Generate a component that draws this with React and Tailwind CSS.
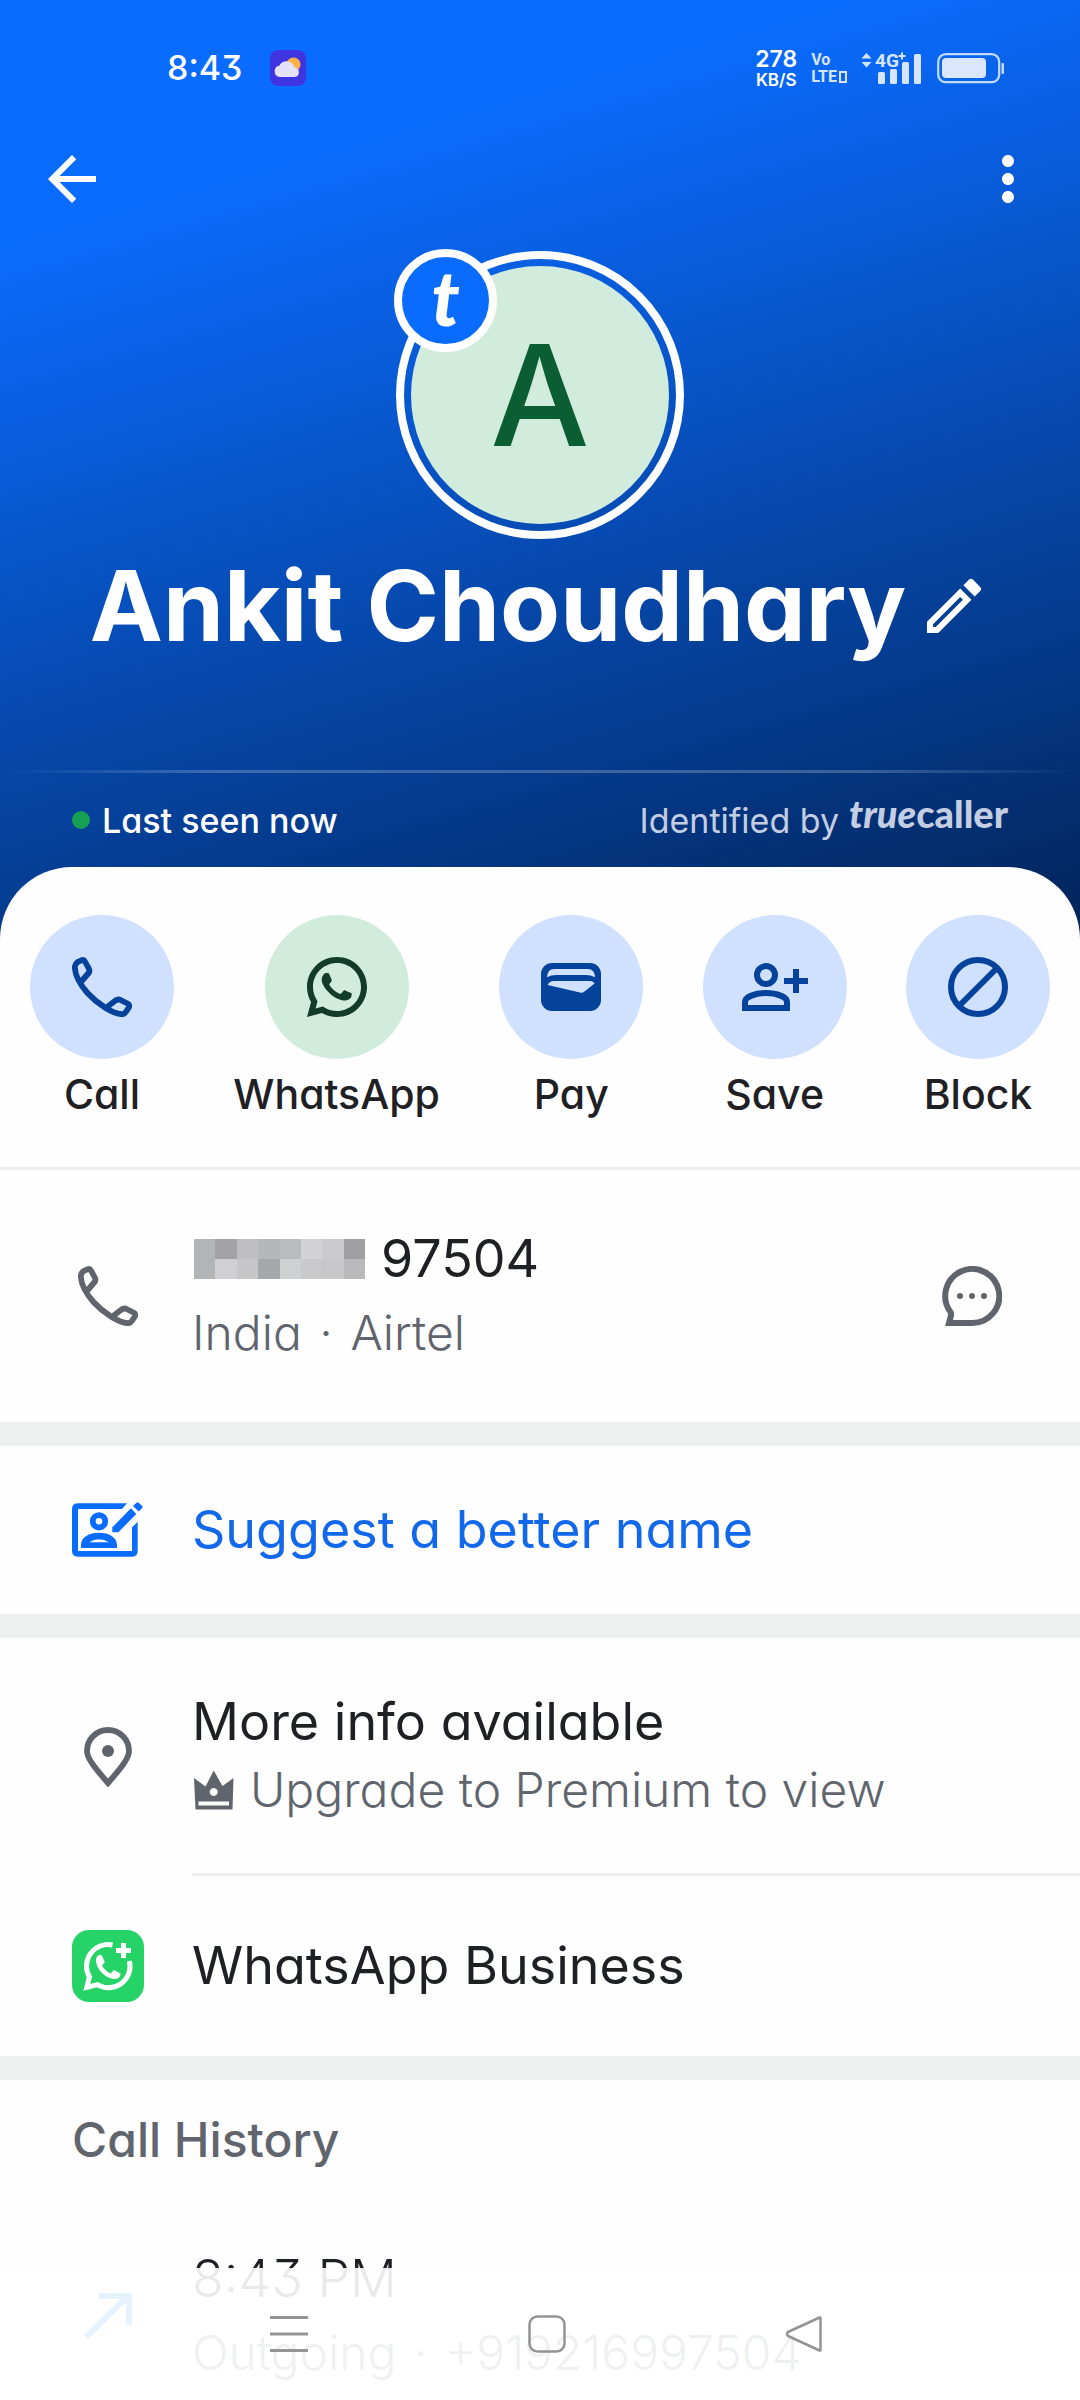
import { MdArrowBack, MdMoreVert, MdOutlineModeEdit } from 'react-icons/md';
import { RiWhatsappLine } from 'react-icons/ri';

const PhoneIcon = () => (
    <svg viewBox="0 0 60 60" className="h-[60px] w-[60px]" fill="none" stroke="currentColor" strokeWidth="5.8" strokeLinejoin="round">
        <path d="M8.5 25.5 L17 15.5 Q18 13.5 16.5 11 L13 4.5 Q11.8 2.3 9 3.5 L5.5 5.2 Q3 6.8 2.8 10 C3 18 8.5 28 15.5 36 C25 46.5 41 57 50 57.2 Q52.5 57.2 54 54.8 L56.8 50.5 Q58 48 55.5 46.5 L48.5 43 Q46 41.8 43.5 43.5 L34.5 50.5" />
    </svg>
);

const PayIcon = () => (
    <svg viewBox="0 0 60 48" className="h-[48px] w-[60px]">
        <rect width="60" height="48" rx="11" fill="currentColor" />
        <path d="M6 14.3 Q6.5 6 13 6 H47 Q53.5 6 54 14.3 Q50 12 45 12 H15 Q10 12 6 14.3Z" fill="#cfe1ff" />
        <path d="M6.6 22 Q8.5 18 13 18 H49.5 Q52.5 18 53.6 20.5 L43.5 28.6 Q41.5 30.3 39 29.6Z" fill="#cfe1ff" />
    </svg>
);

const SaveIcon = () => (
    <svg viewBox="0 0 72 72" className="h-[72px] w-[72px]" fill="none" stroke="currentColor" strokeWidth="6">
        <circle cx="27" cy="24" r="9" />
        <path d="M6 57 V51 C6 46 16 42 27 42 S48 46 48 51 V57Z" />
        <path d="M57 18 V42 M45 30 H69" />
    </svg>
);

const BlockIcon = () => (
    <svg viewBox="0 0 60 60" className="h-[60px] w-[60px]" fill="none" stroke="currentColor" strokeWidth="6">
        <circle cx="30" cy="30" r="27" />
        <path d="M11 49 L49 11" />
    </svg>
);

const ChatIcon = () => (
    <svg viewBox="0 0 60 60" className="h-[60px] w-[60px]">
        <path d="M7 57 H30 A27 27 0 1 0 8.5 46 Q9.3 47.5 9 49.5Z" fill="none" stroke="currentColor" strokeWidth="6" />
        <g fill="currentColor">
            <circle cx="18" cy="30" r="3" />
            <circle cx="30" cy="30" r="3" />
            <circle cx="42" cy="30" r="3" />
        </g>
    </svg>
);

const SuggestIcon = () => (
    <svg viewBox="0 0 72 56" className="h-[56px] w-[72px]">
        <path d="M55 1.3 L50 7 H6 V49 H60 V25.3 L65.7 19.7 V49 Q65.7 54.7 60 54.7 H6 Q0 54.7 0 49 V7 Q0 1.3 6 1.3Z" fill="currentColor" />
        <circle cx="27" cy="19.3" r="6.2" fill="none" stroke="currentColor" strokeWidth="5.8" />
        <path
            fillRule="evenodd"
            d="M9 46 V43 C9 35 17 30.7 27 30.7 S45 35 45 43 V46Z M17.3 40.3 H37 Q32 37.3 27 37.3 T17.3 40.3Z"
            fill="currentColor"
        />
        <path d="M40.3 30.3 V25.3 L59 6.3 L64.3 12 L46.3 30.3Z" fill="currentColor" />
        <path d="M61 4 L64.8 0.6 Q65.8 0 66.7 0.8 L70.3 4.2 Q71 5.2 70.2 6 L66.7 9.4Z" fill="currentColor" />
    </svg>
);

const PinIcon = () => (
    <svg viewBox="0 0 48 60" className="h-[60px] w-[48px]">
        <path d="M24 56 C10 40 3 31 3 24 A21 21 0 0 1 45 24 C45 31 38 40 24 56Z" fill="none" stroke="currentColor" strokeWidth="5.8" />
        <circle cx="24" cy="24" r="6" fill="currentColor" />
    </svg>
);

const CrownIcon = () => (
    <svg viewBox="0 0 40 40" className="h-[40px] w-[40px]">
        <path
            fillRule="evenodd"
            d="M0 8 L11.5 16.5 L19.7 0.5 L28.5 16 L39.5 8 L38.5 39.5 H1.5Z M19.7 18 A4 4 0 1 0 19.8 18Z M4.5 31.5 V35.5 H35 V31.5Z"
            fill="currentColor"
        />
    </svg>
);

const WhatsAppBusinessIcon = () => (
    <svg viewBox="0 0 72 72" className="h-[72px] w-[72px]">
        <rect width="72" height="72" rx="17" fill="#25d366" />
        <path
            d="M40.5 15 A21.5 21.5 0 0 0 17.5 47 L14.8 57.3 L25.4 54.6 A21.5 21.5 0 0 0 57.4 31"
            fill="none"
            stroke="#fff"
            strokeWidth="5"
        />
        <path d="M51.5 13 V28 M44 20.5 H59" stroke="#fff" strokeWidth="5" />
        <path
            d="M24 30 Q24 25.5 28 25 H29.5 L32.8 32 L30 35.5 Q33 41 38.5 43.5 L42 40 L48.5 43.5 Q48.5 48.5 43 49 C34 49 24 39.5 24 30Z"
            fill="#fff"
        />
    </svg>
);

const OutgoingIcon = () => (
    <svg viewBox="0 0 48 48" className="h-[48px] w-[48px]" fill="none" stroke="#0a7cff" strokeWidth="6">
        <path d="M2 45 L44 4 M15 4 H45 V33" />
    </svg>
);

const WeatherIcon = () => (
    <svg viewBox="0 0 36 36" className="h-[36px] w-[36px]">
        <rect width="36" height="36" rx="8" fill="#3f35e0" />
        <circle cx="23.5" cy="14.5" r="7" fill="#fdb045" />
        <path d="M10 27 A5.8 5.8 0 0 1 9.5 15.5 A8 8 0 0 1 23.5 15.5 Q25 18 28.5 20 Q30 26.5 24.5 27Z" fill="#e4e2fb" />
    </svg>
);

const SignalIcon = () => (
    <svg viewBox="0 0 62 36" className="h-[36px] w-[62px] text-[#d6e5fc]" fill="currentColor">
        <path d="M0.5 8.5 L5.5 3 L10.5 8.5Z M0.5 12 H10.5 L5.5 17.5Z" />
        <text x="14" y="17" fontSize="19" fontWeight="700" className="font-[Roboto,sans-serif]">4G</text>
        <path d="M41 2.5 V9.5 M37.5 6 H44.5" stroke="currentColor" strokeWidth="2" />
        <rect x="17" y="22" width="7" height="12" rx="1.5" />
        <rect x="29" y="19" width="7" height="15" rx="1.5" />
        <rect x="41" y="12" width="7" height="22" rx="1.5" />
        <rect x="53" y="4" width="7" height="30" rx="1.5" />
    </svg>
);

const BatteryIcon = () => (
    <svg viewBox="0 0 68 32" className="h-[32px] w-[68px]">
        <rect x="1.2" y="2.2" width="61" height="28" rx="7.5" fill="none" stroke="#c3dafb" strokeWidth="2.2" />
        <rect x="5" y="6" width="44" height="20" rx="4" fill="#d9e6fc" />
        <rect x="64.5" y="11" width="2.5" height="11" rx="1" fill="#c3dafb" />
    </svg>
);

const actions = [
    { label: 'Call', icon: <PhoneIcon /> },
    { label: 'WhatsApp', icon: <RiWhatsappLine size={72} />, green: true },
    { label: 'Pay', icon: <PayIcon /> },
    { label: 'Save', icon: <SaveIcon /> },
    { label: 'Block', icon: <BlockIcon /> },
];

// Hidden digits of the number, two rows of eight blocks
const mosaic = [
    '#b3b4b6', '#a3a3a6', '#bfbfc2', '#b5b7b9', '#b9bbbd', '#d3d3d5', '#cbcbcd', '#a0a0a2',
    '#b3b4b6', '#d0d0d2', '#c6c6c8', '#a6a7aa', '#cfd0d2', '#c9c9cb', '#c7c7ca', '#bababc',
];

const StatusBar = () => (
    <div className="flex h-[136px] items-center justify-between pl-[167px] pr-[75px]">
        <div className="flex items-center gap-7">
            <span className="text-[34px] font-medium leading-none">8:43</span>
            <WeatherIcon />
        </div>
        <div className="flex items-center gap-[14px]">
            <div className="flex flex-col items-center font-semibold">
                <span className="text-[23px] leading-[24px]">278</span>
                <span className="text-[17px] leading-[18px]">KB/S</span>
            </div>
            <div className="flex flex-col font-[Roboto,sans-serif] text-[16px] font-bold leading-[17px] text-[#d6e5fc]">
                <span>Vo</span>
                <span className="flex items-center gap-[2px]">
                    LTE
                    <span className="h-3 w-2 border-2 border-[#d6e5fc]" />
                </span>
            </div>
            <SignalIcon />
            <BatteryIcon />
        </div>
    </div>
);

const Header = () => (
    <header className="bg-[linear-gradient(164deg,#0a6cff_19%,#022458_100%)] pb-[72px] text-white">
        <StatusBar />
        <div className="flex h-[86px] items-center justify-between px-9">
            <button type="button" aria-label="Back">
                <MdArrowBack size={72} />
            </button>
            <button type="button" aria-label="More options">
                <MdMoreVert size={72} />
            </button>
        </div>

        <div className="relative mx-auto mt-[29px] flex h-[288px] w-[288px] items-center justify-center rounded-full border-8 border-white">
            <div className="flex h-[258px] w-[258px] items-center justify-center rounded-full bg-[#d1ebdd] text-[140px] font-medium leading-none text-[#0b5e31]">
                A
            </div>
            <div className="absolute -left-[10px] -top-[10px] flex h-[103px] w-[103px] items-center justify-center rounded-full border-8 border-white bg-[#0a6cff] pb-2 font-[Lato,sans-serif] text-[76px] font-black italic leading-none">
                t
            </div>
        </div>

        <div className="mt-3 flex items-center justify-center gap-3">
            <h1 className="text-[98px] font-bold leading-[110px]">Ankit Choudhary</h1>
            <button type="button" aria-label="Edit name">
                <MdOutlineModeEdit size={72} />
            </button>
        </div>

        <div className="mt-[109px] h-[3px] bg-[linear-gradient(90deg,transparent,#ffffff38_20%,#ffffff38_80%,transparent)]" />
        <div className="flex h-[94px] items-center justify-between px-[72px] text-[34px]">
            <div className="flex items-center gap-3">
                <span className="h-[18px] w-[18px] rounded-full bg-[#16a054]" />
                <span className="font-medium">Last seen now</span>
            </div>
            <div className="flex items-center gap-[10px] text-[#c3cee2]">
                <span>Identified by</span>
                <span className="pb-[14px] font-[Lato,sans-serif] text-[38px] font-black leading-none">
                    <span className="italic">true</span>caller
                </span>
            </div>
        </div>
    </header>
);

const Row = ({ icon, children, className = '' }) => (
    <div className={`flex items-center gap-12 pl-[72px] ${className}`}>
        <div className="flex w-[72px] shrink-0 justify-center text-[#60656d]">{icon}</div>
        {children}
    </div>
);

const Band = () => <div className="h-6 bg-[#eef0ef]" />;

const NavBar = () => (
    <nav className="fixed inset-x-0 bottom-0 flex h-[132px] items-center justify-between bg-white/90 pl-[253px] pr-[240px] text-[#949494]">
        <button type="button" aria-label="Recent apps" className="flex w-[72px] justify-center">
            <svg viewBox="0 0 38 38" className="h-[38px] w-[38px]" stroke="currentColor" strokeWidth="3">
                <path d="M0 2.5 H38 M0 19 H38 M0 35.5 H38" />
            </svg>
        </button>
        <button type="button" aria-label="Home" className="flex w-[72px] justify-center">
            <svg viewBox="0 0 38 38" className="h-[38px] w-[38px]" fill="none" stroke="currentColor" strokeWidth="2.5">
                <rect x="1.5" y="1.5" width="35" height="35" rx="8" />
            </svg>
        </button>
        <button type="button" aria-label="Back to previous app" className="flex w-[72px] justify-center">
            <svg viewBox="0 0 38 38" className="h-[38px] w-[38px]" fill="none" stroke="currentColor" strokeWidth="2.5" strokeLinejoin="round">
                <path d="M35.5 3.5 V34.5 Q35.5 36.5 33.5 35 L3 21 Q1 19 3 17 L33.5 3 Q35.5 1.5 35.5 3.5Z" />
            </svg>
        </button>
    </nav>
);

export default function App() {
    return (
        <div className="min-h-screen bg-[#fefefe] font-[Inter,Roboto,sans-serif] text-[#1f2024] [font-feature-settings:'cv11','cv09']">
            <Header />

            <main className="-mt-[72px] rounded-t-[72px] bg-[#fefefe]">
                {/* Quick actions */}
                <section className="flex justify-between border-b-3 border-[#eeeeee] px-[30px] py-12">
                    {actions.map(({ label, icon, green }) => (
                        <button key={label} type="button" className="flex min-w-[144px] flex-col items-center gap-[10px]">
                            <span
                                className={`flex h-[144px] w-[144px] items-center justify-center rounded-full ${
                                    green ? 'bg-[#d1ebdd] text-[#123b29]' : 'bg-[#cfe1ff] text-[#05429b]'
                                }`}
                            >
                                {icon}
                            </span>
                            <span className="text-[41px] font-medium leading-[50px]">{label}</span>
                        </button>
                    ))}
                </section>

                {/* Number */}
                <Row icon={<PhoneIcon />} className="py-[52px] pr-[78px]">
                    <div className="grow leading-[74px]">
                        <div className="flex items-center gap-4 pl-[2px] text-[52px]">
                            <div className="grid w-[171px] grid-cols-8">
                                {mosaic.map((color, i) => (
                                    <span key={i} className="h-5" style={{ backgroundColor: color }} />
                                ))}
                            </div>
                            <span>97504</span>
                        </div>
                        <p className="text-[48px] font-light text-[#60656d]">
                            India <span className="mx-1">·</span> Airtel
                        </p>
                    </div>
                    <button type="button" aria-label="Send message" className="text-[#60656d]">
                        <ChatIcon />
                    </button>
                </Row>
                <Band />

                <button type="button" className="block w-full text-left">
                    <Row icon={<span className="text-[#0a6cff]"><SuggestIcon /></span>} className="h-[168px]">
                        <span className="text-[52px] text-[#1268ea]">Suggest a better name</span>
                    </Row>
                </button>
                <Band />

                <Row icon={<PinIcon />}>
                    <div className="grow border-b-3 border-[#eeeeee] pb-[49px] pt-[50px] leading-[68px]">
                        <p className="text-[52px]">More info available</p>
                        <p className="flex items-center gap-4 pl-[2px] text-[48px] font-light text-[#60656d]">
                            <CrownIcon />
                            Upgrade to Premium to view
                        </p>
                    </div>
                </Row>
                <Row icon={<WhatsAppBusinessIcon />} className="h-[180px]">
                    <span className="text-[52px]">WhatsApp Business</span>
                </Row>
                <Band />

                {/* Call history */}
                <section className="pt-[30px]">
                    <h2 className="px-[72px] text-[48px] font-medium leading-[60px] text-[#60656d]">Call History</h2>
                    <Row icon={<OutgoingIcon />} className="pt-[72px]">
                        <div className="font-light leading-[74px]">
                            <p className="text-[52px]">8:43 PM</p>
                            <p className="text-[48px] text-[#60656d]">
                                Outgoing <span className="mx-1">·</span> +919216997504
                            </p>
                        </div>
                    </Row>
                </section>
            </main>

            <NavBar />
        </div>
    );
}
